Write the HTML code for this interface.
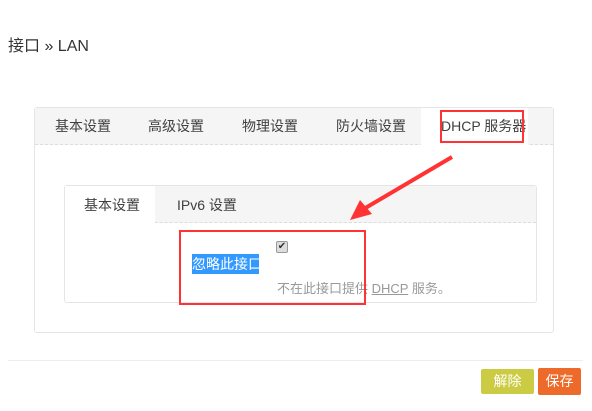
<!DOCTYPE html>
<html><head><meta charset="utf-8"><style>
*{margin:0;padding:0;box-sizing:border-box}
body{width:592px;height:411px;background:#fff;font-family:"Liberation Sans","Noto Sans CJK SC",sans-serif;color:#333;position:relative;overflow:hidden}
.a{position:absolute}
.t{font-size:14px;color:#404040;white-space:nowrap}
</style></head><body>
<div class="a" style="left:8px;top:32px;font-size:16px;color:#333">接口 » LAN</div>
<div class="a" style="left:34px;top:107px;width:520px;height:226px;border:1px solid #e3e6e8;border-radius:3px;background:#fff"></div>
<div class="a" style="left:35px;top:108px;width:518px;height:37px;background:#f5f5f5;border-bottom:1px dashed #ddd"></div>
<div class="a" style="left:421px;top:108px;width:107px;height:38px;background:#fff"></div>
<div class="a t" style="left:55px;top:116px">基本设置</div>
<div class="a t" style="left:148px;top:116px">高级设置</div>
<div class="a t" style="left:242px;top:116px">物理设置</div>
<div class="a t" style="left:336px;top:116px">防火墙设置</div>
<div class="a t" style="left:441px;top:116px">DHCP 服务器</div>
<div class="a" style="left:440px;top:110px;width:84px;height:33px;border:2px solid #f33"></div>
<div class="a" style="left:64px;top:185px;width:473px;height:118px;border:1px solid #e3e6e8;border-radius:3px;background:#fff"></div>
<div class="a" style="left:65px;top:186px;width:471px;height:37px;background:#f5f5f5;border-bottom:1px dashed #ddd"></div>
<div class="a" style="left:65px;top:186px;width:90px;height:38px;background:#fff"></div>
<div class="a t" style="left:84px;top:195px">基本设置</div>
<div class="a t" style="left:177px;top:195px">IPv6 设置</div>
<div class="a" style="left:276px;top:241px;width:12px;height:12px;border:1px solid #999;border-radius:2px;background:#ddd;font-size:10px;line-height:10px;text-align:center;color:#333">✔</div>
<div class="a" style="left:192px;top:254px;width:67px;height:20px;background:#3399ff;color:#fff;font-size:14px;line-height:20px;white-space:nowrap">忽略此接口</div>
<div class="a" style="left:277px;top:278px;font-size:13px;color:#999;white-space:nowrap">不在此接口提供 <span style="text-decoration:underline">DHCP</span> 服务。</div>
<div class="a" style="left:179px;top:230px;width:187px;height:75px;border:2px solid #f33"></div>
<svg class="a" style="left:340px;top:150px" width="120" height="80"><path d="M112 7 L22 60" stroke="#f33" stroke-width="4" fill="none"/><path d="M10 70 L20 50 L32 64 Z" fill="#f33"/></svg>
<div class="a" style="left:8px;top:360px;width:575px;height:1px;background:#eee"></div>
<div class="a" style="left:481px;top:369px;width:53px;height:25px;background:#cccc44;border-radius:2px;color:#fff;font-size:14px;line-height:25px;text-align:center">解除</div>
<div class="a" style="left:538px;top:368px;width:43px;height:27px;background:#ee6a2a;border-radius:2px;color:#fff;font-size:14px;line-height:27px;text-align:center">保存</div>
</body></html>
